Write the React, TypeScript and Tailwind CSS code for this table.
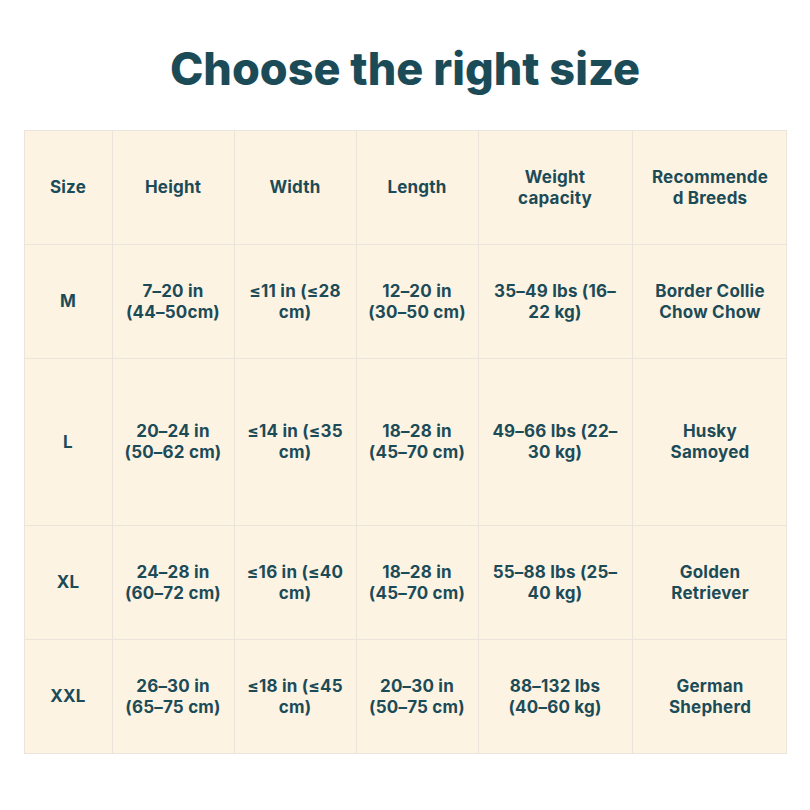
const rows: string[][][] = [
  [["Size"], ["Height"], ["Width"], ["Length"], ["Weight", "capacity"], ["Recommende", "d Breeds"]],
  [["M"], ["7–20 in", "(44–50cm)"], ["≤11 in (≤28", "cm)"], ["12–20 in", "(30–50 cm)"], ["35–49 lbs (16–", "22 kg)"], ["Border Collie", "Chow Chow"]],
  [["L"], ["20–24 in", "(50–62 cm)"], ["≤14 in (≤35", "cm)"], ["18–28 in", "(45–70 cm)"], ["49–66 lbs (22–", "30 kg)"], ["Husky", "Samoyed"]],
  [["XL"], ["24–28 in", "(60–72 cm)"], ["≤16 in (≤40", "cm)"], ["18–28 in", "(45–70 cm)"], ["55–88 lbs (25–", "40 kg)"], ["Golden", "Retriever"]],
  [["XXL"], ["26–30 in", "(65–75 cm)"], ["≤18 in (≤45", "cm)"], ["20–30 in", "(50–75 cm)"], ["88–132 lbs", "(40–60 kg)"], ["German", "Shepherd"]],
];

const heights = ["h-[113px]", "h-[114px]", "h-[167px]", "h-[114px]", "h-[114px]"];

export default function App() {
  return (
    <div className="w-[810px] h-[810px] bg-white flex flex-col items-center font-['Inter',sans-serif] text-[#1c4b58]">
      <h1 className="mt-[42px] h-[54px] text-[45px] leading-[54px] font-extrabold tracking-[0px]">Choose the right size</h1>
      <div className="mt-[34px] w-[763px] border border-[#ebe4da] bg-[#fdf3e3]">
        {rows.map((row, r) => (
          <div key={r} className={`grid grid-cols-[87px_122px_122px_122px_154px_156px] ${heights[r]} ${r > 0 ? "border-t border-[#ebe4da]" : ""}`}>
            {row.map((cell, c) => (
              <div key={c} className={`flex flex-col items-center justify-center text-center text-[17px] leading-[21px] font-bold tracking-[0.2px] ${c > 0 ? "border-l border-[#ebe4da]" : ""}`}>
                {cell.map((line, i) => (
                  <span key={i} className="whitespace-nowrap">{line}</span>
                ))}
              </div>
            ))}
          </div>
        ))}
      </div>
    </div>
  );
}
